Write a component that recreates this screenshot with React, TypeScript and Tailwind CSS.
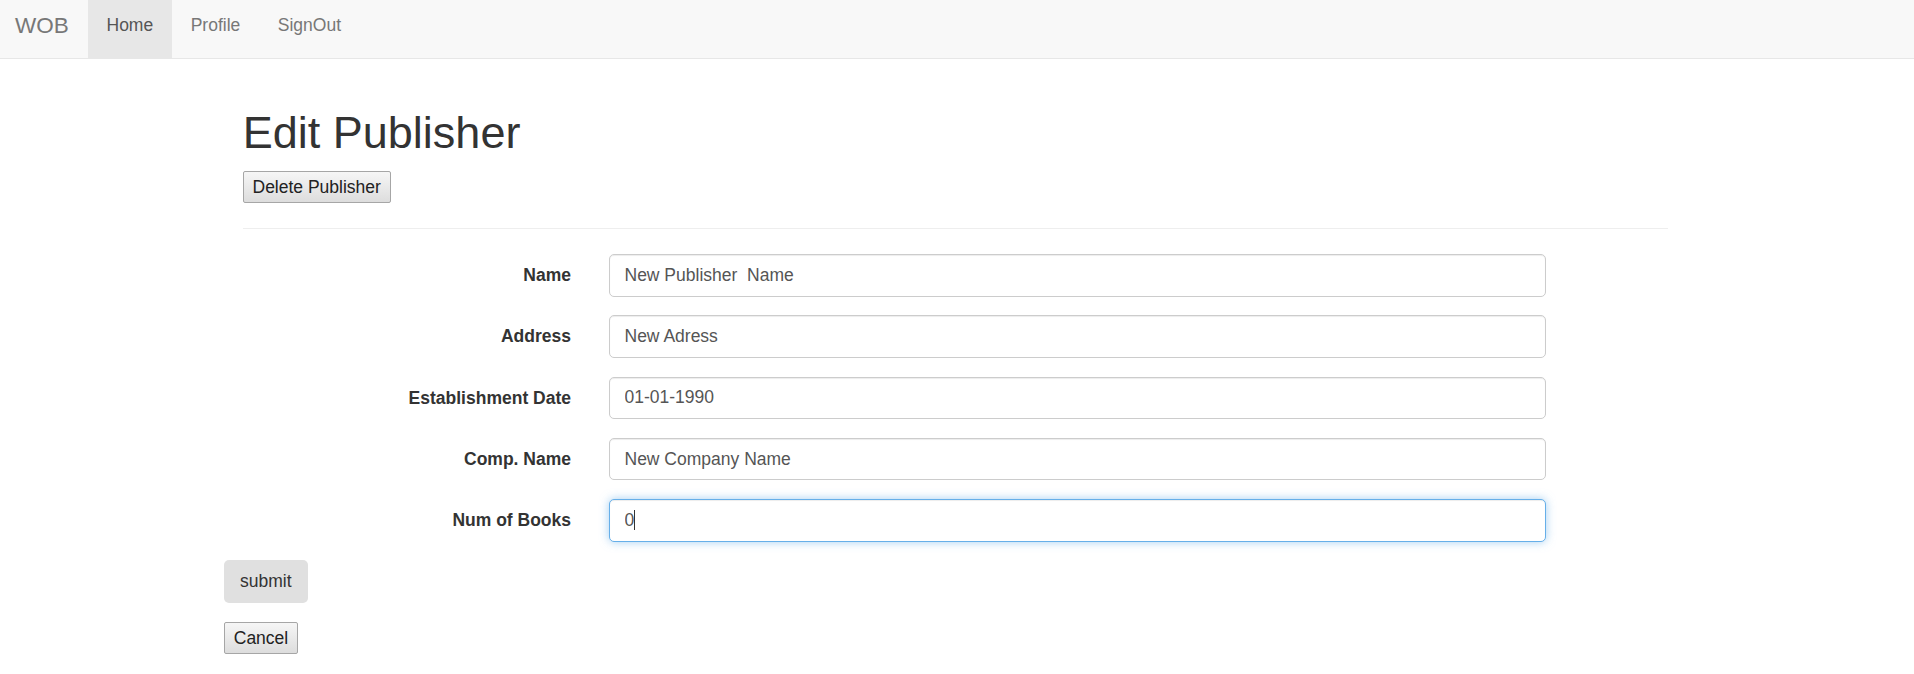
/**
 * Edit Publisher page
 */

const font = { fontFamily: '"Liberation Sans", Arial, Helvetica, sans-serif' }

const fields = [
  { label: 'Name', value: 'New Publisher  Name' },
  { label: 'Address', value: 'New Adress' },
  { label: 'Establishment Date', value: '01-01-1990' },
  { label: 'Comp. Name', value: 'New Company Name' },
  { label: 'Num of Books', value: '0', focused: true },
]

function Navbar() {
  return (
    <nav className="h-[59px] w-full bg-[#f8f8f8] border-b border-[#e7e7e7] flex">
      <a className="h-full flex items-center pb-[7px] pl-[15px] pr-[19px] text-[22.5px] text-[#777]">
        WOB
      </a>
      <a className="h-full flex items-center pb-[7px] px-[18.75px] text-[17.5px] text-[#555] bg-[#e7e7e7]">
        Home
      </a>
      <a className="h-full flex items-center pb-[7px] px-[18.75px] text-[17.5px] text-[#777]">
        Profile
      </a>
      <a className="h-full flex items-center pb-[7px] px-[18.75px] text-[17.5px] text-[#777]">
        SignOut
      </a>
    </nav>
  )
}

function FormRow({ label, value, focused }: { label: string; value: string; focused?: boolean }) {
  return (
    <div className="flex mb-[18.75px]">
      <label className="w-[365.75px] pr-[18.75px] h-[42.5px] flex items-center justify-end font-bold text-[17.5px] text-[#333]">
        {label}
      </label>
      <div className="w-[975.3px] px-[18.75px]">
        <div className="relative">
          <input
            defaultValue={value}
            className={
              focused
                ? 'w-full h-[42.5px] px-[15px] rounded-[5px] border border-[#66afe9] bg-white text-[17.5px] text-[#555] outline-none shadow-[inset_0_1px_1px_rgba(0,0,0,0.075),0_0_10px_rgba(102,175,233,0.6)]'
                : 'w-full h-[42.5px] px-[15px] rounded-[5px] border border-[#ccc] bg-white text-[17.5px] text-[#555] outline-none shadow-[inset_0_1px_1px_rgba(0,0,0,0.075)]'
            }
            style={font}
          />
          {focused && <span className="absolute left-[25.5px] top-[11px] h-[20px] w-px bg-[#333]" />}
        </div>
      </div>
    </div>
  )
}

export default function App() {
  return (
    <div className="min-h-screen bg-white text-[#333]" style={font}>
      <Navbar />

      <div className="ml-[224px] w-[1463px]">
        {/* Header */}
        <div className="px-[18.75px]">
          <h1 className="mt-[49px] mb-[13.5px] text-[45px] leading-[49.5px] font-normal text-[#333]">
            Edit Publisher
          </h1>
          <button className="h-[32px] px-[8.75px] text-[17.5px] text-[#222] border border-[#a6a6a6] rounded-[2px] bg-linear-to-b from-[#f6f6f6] to-[#dddddd]">
            Delete Publisher
          </button>
          <hr className="mt-[25px] mb-[25px] border-0 border-t border-[#eeeeee]" />
        </div>

        {/* Form */}
        <form onSubmit={(e) => e.preventDefault()}>
          {fields.map((f) => (
            <FormRow key={f.label} label={f.label} value={f.value} focused={f.focused} />
          ))}
          <div>
            <button className="h-[42.5px] px-[16px] rounded-[5px] bg-[#e0e0e0] text-[17.5px] text-[#333]">
              submit
            </button>
          </div>
          <div className="mt-[19px]">
            <button
              type="button"
              className="h-[32px] px-[8.75px] text-[17.5px] text-[#222] border border-[#a6a6a6] rounded-[2px] bg-linear-to-b from-[#f6f6f6] to-[#dddddd]"
            >
              Cancel
            </button>
          </div>
        </form>
      </div>
    </div>
  )
}
